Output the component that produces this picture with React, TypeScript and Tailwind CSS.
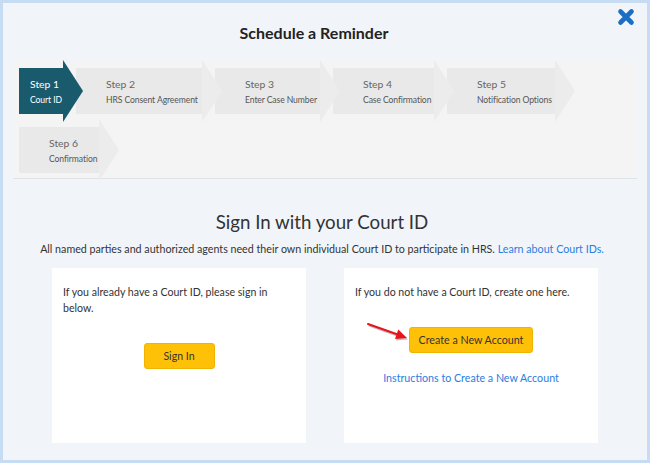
const steps = [
  { n: 'Step 1', label: 'Court ID', w: 'w-[44px]', active: true },
  { n: 'Step 2', label: 'HRS Consent Agreement', w: 'w-[126px]' },
  { n: 'Step 3', label: 'Enter Case Number', w: 'w-[105px]' },
  { n: 'Step 4', label: 'Case Confirmation', w: 'w-[101px]' },
  { n: 'Step 5', label: 'Notification Options', w: 'w-[108px]' },
  { n: 'Step 6', label: 'Confirmation', w: 'w-[80px]' },
]

function Step({ n, label, w, active }: { n: string; label: string; w: string; active?: boolean }) {
  return (
    <div
      className={`relative h-[46px] shrink-0 pt-[8px] leading-[16px] whitespace-nowrap ${w} ${
        active ? 'bg-[#1a5a6d] pl-[11px] text-white' : 'bg-[#e9e9e9] pl-[30px] text-[#666]'
      }`}
    >
      <div className="text-[10.4px]">{n}</div>
      <div className={`text-[8.6px] tracking-[-0.1px] ${active ? 'text-white' : 'text-[#555]'}`}>{label}</div>
      {/* arrow head */}
      <span
        className={`absolute left-full top-[-8px] z-10 h-0 w-0 border-y-[31px] border-l-[20px] border-y-transparent ${
          active ? 'border-l-[#1a5a6d]' : 'border-l-[#ececec]'
        }`}
      />
    </div>
  )
}

export default function App() {
  return (
    <div className="relative h-[463px] w-[650px] border-[3px] border-[#c6dcf2] bg-[#f1f5fa] font-['Lato','Noto_Sans',sans-serif] text-[#333]">

      {/* Header */}
      <h1 className="pr-[22px] pt-[19px] text-center text-[16px] font-bold leading-[22px] text-[#222]">
        Schedule a Reminder
      </h1>
      <button className="absolute right-[12px] top-[5px] p-0">
        <svg width="18" height="18" viewBox="0 0 18 18">
          <path d="M3.5 3.5L14.5 14.5M14.5 3.5L3.5 14.5" stroke="#1b6ec3" strokeWidth="4.6" strokeLinecap="round" />
        </svg>
      </button>

      {/* Steps */}
      <div className="mx-[10px] mt-[18px] flex flex-wrap gap-x-[13px] gap-y-[13px] border-b border-[#dfe3e8] bg-[#f4f4f4] px-[6px] pb-[5px] pt-[6px]">
        {steps.map((s) => (
          <Step key={s.n} {...s} />
        ))}
      </div>

      {/* Sign in */}
      <h2 className="mt-[31px] pr-[6px] text-center text-[18.7px] leading-[24px] text-[#333]">Sign In with your Court ID</h2>
      <p className="mt-[7px] pr-[6px] text-center text-[10.7px] leading-[16px]">
        All named parties and authorized agents need their own individual Court ID to participate in HRS.{' '}
        <a className="text-[#2a7de1]">Learn about Court IDs.</a>
      </p>

      <div className="mt-[11px] flex justify-center gap-[38px]">
        <div className="h-[175px] w-[254px] bg-white px-[11px] pt-[16px] text-[10.6px] leading-[16px]">
          <p>If you already have a Court ID, please sign in below.</p>
          <div className="mt-[27px] flex justify-center">
            <button className="h-[26px] w-[71px] rounded-[3px] border border-[#f0b400] bg-[#ffc107] text-[10.6px] text-[#333]">
              Sign In
            </button>
          </div>
        </div>

        <div className="relative h-[175px] w-[254px] bg-white px-[11px] pt-[16px] text-[10.6px] leading-[16px]">
          <p>If you do not have a Court ID, create one here.</p>
          <div className="mt-[27px] flex justify-center">
            <button className="h-[26px] w-[124px] rounded-[3px] border border-[#f0b400] bg-[#ffc107] text-[10.7px] text-[#333]">
              Create a New Account
            </button>
          </div>
          <div className="mt-[17px] text-center">
            <a className="text-[10.7px] text-[#2a7de1]">Instructions to Create a New Account</a>
          </div>

          {/* red pointer arrow */}
          <svg className="absolute left-[17px] top-[49px]" width="50" height="28" viewBox="0 0 50 28">
            <g transform="translate(1 1.5)" opacity="0.25">
              <line x1="7" y1="7" x2="36" y2="17.3" stroke="#000" strokeWidth="2" />
              <polygon points="46,21 34,22 37.3,12.6" fill="#000" />
            </g>
            <line x1="7" y1="7" x2="36" y2="17.3" stroke="#e8141c" strokeWidth="2" strokeLinecap="round" />
            <polygon points="46,21 34,22 37.3,12.6" fill="#e8141c" />
          </svg>
        </div>
      </div>
    </div>
  )
}
